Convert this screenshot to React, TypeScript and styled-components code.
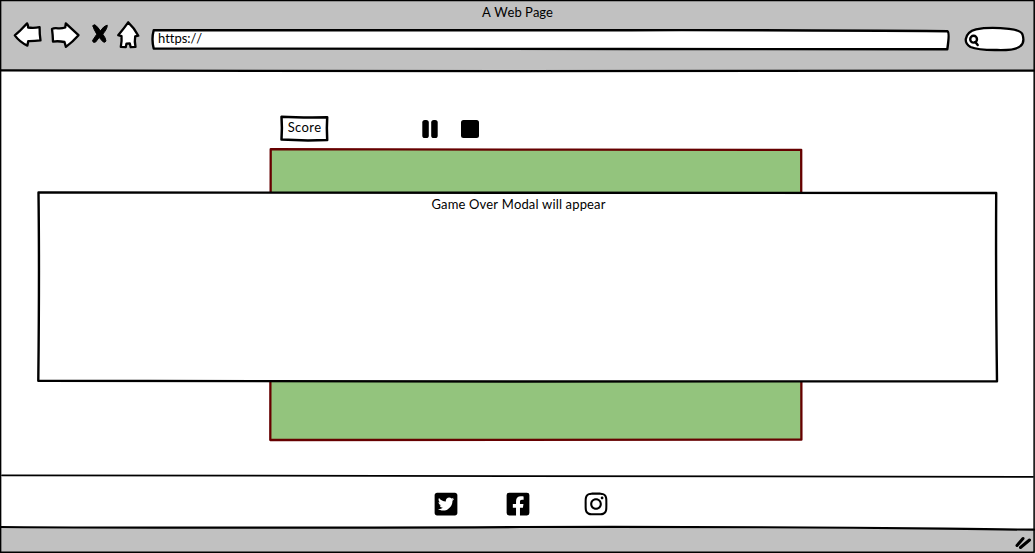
import React from "react";
import styled, { createGlobalStyle } from "styled-components";
import { FaTwitterSquare, FaFacebookSquare, FaInstagram } from "react-icons/fa";

const GlobalStyle = createGlobalStyle`
  * { box-sizing: border-box; }
  body { margin: 0; background: #fff; overflow: hidden; }
  svg { display: block; }
`;

const BrowserWindow = styled.div`
  position: relative;
  display: flex;
  flex-direction: column;
  width: 1035px;
  height: 553px;
  background: #fff;
  color: #000;
  font: 13px/16px Lato, "Open Sans", sans-serif;
`;

const Ink = styled.svg`
  position: absolute;
  inset: 0;
  width: 100%;
  height: 100%;
  overflow: visible;
  pointer-events: none;
  stroke-linecap: round;
  stroke-linejoin: round;
`;

const Chrome = styled.header`
  height: 71px;
  flex: none;
  background: #c1c1c1;
`;

const Title = styled.div`
  height: 20px;
  padding-top: 4px;
  text-align: center;
`;

const Toolbar = styled.div`
  display: flex;
  height: 32px;
  padding: 0 9px 0 12px;
`;

const ToolIcon = styled.svg<{ $gap?: number }>`
  flex: none;
  height: 32px;
  margin-left: ${(p) => p.$gap ?? 0}px;
  fill: #fff;
  stroke: #000;
  stroke-width: 2.3;
  stroke-linejoin: round;
  stroke-linecap: round;
`;

const AddressBar = styled.div`
  position: relative;
  width: 800px;
  height: 23px;
  margin: 8px 11px 0 9px;
  padding: 2px 7px;
`;

const Label = styled.span<{ $spacing?: number }>`
  position: relative;
  letter-spacing: ${(p) => p.$spacing ?? 0}px;
  font-kerning: none;
  white-space: nowrap;
`;

const Page = styled.main`
  position: relative;
  flex: 1;
  padding: 44px 232px 0 269px;
`;

const Controls = styled.div`
  display: flex;
  height: 33px;
  padding-left: 11px;
`;

const Score = styled.div`
  position: relative;
  width: 49px;
  height: 27px;
  padding-top: 4px;
  text-align: center;
`;

const Control = styled.svg<{ $gap: number }>`
  width: 18px;
  height: 18px;
  margin: 5px 0 0 ${(p) => p.$gap}px;
`;

const Board = styled.div`
  position: relative;
  width: 534px;
  height: 294px;
`;

const Modal = styled.section`
  position: absolute;
  left: 37px;
  top: 120px;
  width: 961px;
  height: 192px;
  padding: 5px 0 0 2px;
  text-align: center;
`;

const Social = styled.footer`
  position: relative;
  display: flex;
  flex: none;
  height: 51px;
  padding: 15px 0 0 433px;
`;

const SocialLink = styled.span<{ $gap?: number }>`
  margin-left: ${(p) => p.$gap ?? 0}px;
  font-size: 26px;
  width: 26px;
  height: 26px;
`;

const StatusBar = styled.div`
  position: relative;
  flex: none;
  height: 26px;
`;

export default function App() {
  return (
    <>
      <GlobalStyle />
      <BrowserWindow>
        <Chrome>
          <Title><Label>A Web Page</Label></Title>
          <Toolbar>
            <ToolIcon width="32" viewBox="12 20 32 32">
              <path d="M14.8 35.3 19.5 31.2 27.1 23.4Q28.2 25.1 28.1 27.5 34 28.2 39.6 27.2 39.5 34 40.5 40.4 34 41.3 28.2 41.2L27.4 45.6Q19.5 41.8 14.8 35.3Z" />
            </ToolIcon>
            <ToolIcon width="34" viewBox="48 20 34 32" $gap={4}>
              <path d="M52 29Q54 27.8 58 28.3 62 28.6 65.2 27.5L65.8 23.3 72 29.2 78.5 35.2Q72.5 42 65.9 46.9L64.5 42Q58 40.7 53 41.6 52.8 34.8 52 29Z" />
            </ToolIcon>
            <ToolIcon width="24" viewBox="88 20 24 32" $gap={6}>
              <path fill="#000" strokeWidth="1" d="M93 26Q93.3 24.5 94.9 24.8 98.3 27.2 100.3 31 103.7 26 107.2 25.1 107.8 28 102.8 34.2 105.7 38 106 41 105.3 43 103 41.8L99.2 37.4 95.6 42.1Q92.7 43.2 92.5 40.6L96.8 34.2Q93.5 29 93 26Z" />
            </ToolIcon>
            <ToolIcon width="28" viewBox="114 20 28 32" $gap={2}>
              <path d="M128.2 22.3Q123.8 28.5 118.2 35.2L121.5 36.2Q122 41.5 120.8 46.8L125.8 47.1 126.5 43.6 129.8 43.5 130.7 47.2 135.5 46.8Q134.3 41.5 135.2 36.4L138.3 35.7Q134.2 27.8 128.2 22.3Z" />
            </ToolIcon>
            <AddressBar>
              <Ink viewBox="0 0 800 23">
                <path d="M2.7 2.2Q250 1.7 480 2.2Q660 2 796.5 3.2Q798.8 4.5 796.3 21.3Q640 21.2 480 21Q240 20.7 2.7 20.5Q.3 11 2.7 2.2Z" fill="#fff" stroke="#000" strokeWidth="2.4" />
              </Ink>
              <Label $spacing={-0.05}>https://</Label>
            </AddressBar>
            <ToolIcon width="64" viewBox="962 20 64 32">
              <path d="M976 29.3Q989 26.8 1009 28.8Q1021 30.2 1022.5 34.5Q1025 42.5 1020.5 46Q1016 50.5 997 50Q978 50.2 970.5 47Q965.2 44 965.8 39Q967 31.5 976 29.3Z" />
              <circle cx="973.6" cy="39.2" r="3.4" strokeWidth="2.4" />
              <path d="m975.3 42 2.4 3" strokeWidth="2.4" />
            </ToolIcon>
          </Toolbar>
        </Chrome>

        <Page>
          <Controls>
            <Score>
              <Ink viewBox="0 0 49 27">
                <path d="M1.5 1.7Q20 2.7 47.2 2.3 46.5 13 47.2 25 24 26 1.5 24.6 2.3 13 1.5 1.7Z" fill="#fff" stroke="#000" strokeWidth="2.5" />
              </Ink>
              <Label $spacing={0.3}>Score</Label>
            </Score>
            <Control viewBox="0 0 18 18" $gap={93}>
              <rect x=".3" width="6.5" height="18" rx="2.6" />
              <rect x="9.2" width="6.5" height="18" rx="2.6" />
            </Control>
            <Control viewBox="0 0 18 18" $gap={21}>
              <rect width="18" height="18" rx="2.5" />
            </Control>
          </Controls>
          <Board>
            <Ink viewBox="0 0 534 294">
              <path d="M1.7 1.2Q150 1.8 300 1.7T532.2 1.8Q531.8 130 532.4 291.7 250 292.5 1.3 292Q2 120 1.7 1.2Z" fill="#93c47d" stroke="#660000" strokeWidth="2.3" />
            </Ink>
          </Board>
          <Modal>
            <Ink viewBox="0 0 961 192">
              <path d="M1.5 1.4Q270 2.2 480 1.8T959.2 2Q958.7 90 960 190.2 640 190.7 480 190.5T1.3 189.8Q2.5 80 1.5 1.4Z" fill="#fff" stroke="#000" strokeWidth="2.4" />
            </Ink>
            <Label $spacing={0.14}>Game Over Modal will appear</Label>
          </Modal>
        </Page>

        <Social>
          <Ink viewBox="0 0 1035 51" fill="none" stroke="#000">
            <path d="M2 -.7Q200 .6 520 .1T1033 .8" strokeWidth="1.8" />
          </Ink>
          <SocialLink><FaTwitterSquare /></SocialLink>
          <SocialLink $gap={46}><FaFacebookSquare /></SocialLink>
          <SocialLink $gap={52}><FaInstagram /></SocialLink>
        </Social>

        <StatusBar>
          <Ink viewBox="0 0 1035 26" stroke="#000">
            <path d="M0 0Q180 1.4 520 0C780-.8 850 .8 1035 2.7V26H0Z" fill="#c1c1c1" stroke="none" />
            <path d="M1 0Q180 1.4 520 0C780-.8 850 .8 1034 2.7" fill="none" strokeWidth="2.2" />
            <path d="m1017 18.5 6-7M1020.5 20.5l9-7.5" strokeWidth="3" />
          </Ink>
        </StatusBar>

        <Ink viewBox="0 0 1035 553" fill="none" stroke="#000">
          <path d="M.6.6H1034.2L1034.1 552.3H.6Z" strokeWidth="1.5" />
          <path d="M1 70.4Q240 71.3 520 71.2T1034 70.7" strokeWidth="2.2" />
        </Ink>
      </BrowserWindow>
    </>
  );
}
